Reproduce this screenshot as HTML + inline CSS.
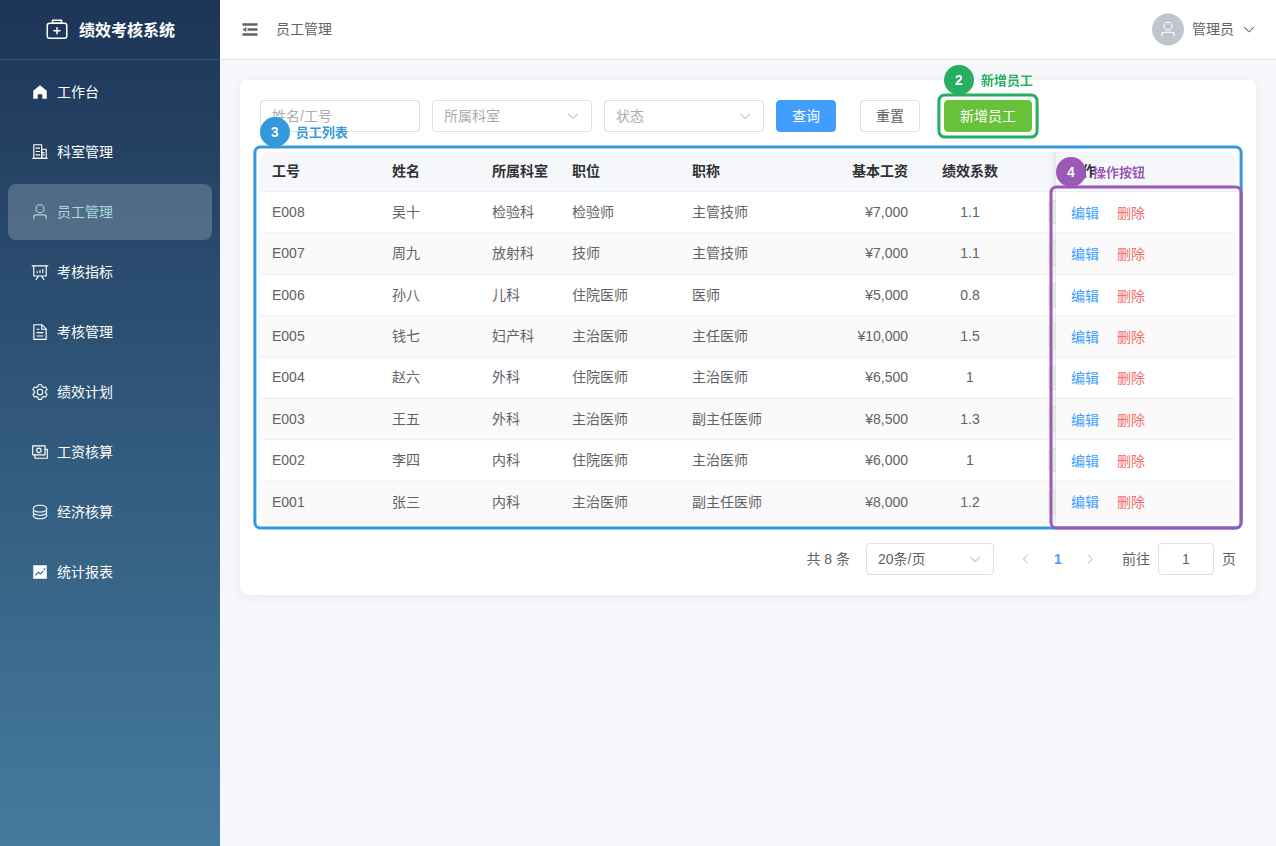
<!DOCTYPE html>
<html lang="zh-CN">
<head>
<meta charset="utf-8">
<title>绩效考核系统 - 员工管理</title>
<style>
*{box-sizing:border-box;margin:0;padding:0}
html,body{width:1276px;height:846px;overflow:hidden}
body{font-family:"Liberation Sans","Noto Sans CJK SC",sans-serif;font-size:14px;color:#606266;background:#f5f7fa;position:relative}
svg{display:block;fill:currentColor}
/* sidebar */
.aside{position:absolute;left:0;top:0;width:220px;height:846px;background:linear-gradient(180deg,#1d3557 0%,#457b9d 100%);color:#fff}
.logo{height:60px;display:flex;align-items:center;justify-content:center;border-bottom:1px solid rgba(255,255,255,.1);color:#fff}
.logo svg{width:24px;height:24px;margin-right:10px}
.logo span{font-size:16px;font-weight:700;letter-spacing:0;position:relative;top:-1px}
.menu{list-style:none}
.menu li{height:56px;margin:4px 8px;padding:0 20px;display:flex;align-items:center;border-radius:8px;color:#fff;font-size:14px;line-height:56px;white-space:nowrap}
.menu li .ic{width:24px;height:18px;margin-right:5px;display:flex;align-items:center;justify-content:center;flex:none}
.menu li .ic svg{width:18px;height:18px}
.menu li.active{background:rgba(255,255,255,.2);color:#a8dadc}
/* header */
.header{position:absolute;left:220px;top:0;width:1056px;height:60px;background:#fff;border-bottom:1px solid #e4e7ed;display:flex;align-items:center;justify-content:space-between;padding:0 20px 1px}
.hl{display:flex;align-items:center;transform:translateY(.45px)}
.fold{width:20px;height:20px;color:#606266;margin-right:16px}
.fold svg{width:20px;height:20px}
.crumb{font-size:14px;color:#606266;line-height:1;position:relative;top:0}
.hr{display:flex;align-items:center;color:#606266;transform:translateY(.45px)}
.avatar{width:32px;height:32px;border-radius:50%;background:#c0c4cc;color:#fff;display:flex;align-items:center;justify-content:center}
.avatar svg{width:18px;height:18px}
.uname{margin:0 8px;font-size:14px;position:relative;top:-1px}
.hr .arr svg{width:14px;height:14px}
/* main card */
.card{position:absolute;left:240px;top:80px;width:1016px;height:515px;background:#fff;border-radius:8px;box-shadow:0 2px 12px rgba(0,0,0,.06)}
.filters{position:absolute;left:20px;top:20px;height:32px;display:flex;align-items:center}
.inp{width:160px;height:32px;border:1px solid #dcdfe6;border-radius:4px;padding:0 11px;display:flex;align-items:center;justify-content:space-between;color:#a8abb2;font-size:14px;margin-right:12px;background:#fff}
.inp svg{width:14px;height:14px;color:#a8abb2}
.btn{height:32px;padding:0 15px;border-radius:4px;border:1px solid #dcdfe6;background:#fff;color:#606266;font-size:14px;display:flex;align-items:center;justify-content:center;white-space:nowrap}
.btn.primary{background:#409eff;border-color:#409eff;color:#fff}
.btn.success{background:#67c23a;border-color:#67c23a;color:#fff}
/* table */
.tbl{position:absolute;left:20px;top:72px;width:976px;border-collapse:separate;border-spacing:0;table-layout:fixed;font-size:14px;color:#606266}
.tbl th{height:40px;background:#f5f7fa;color:#303133;font-weight:700;text-align:left;padding:0 12px;border-bottom:1px solid #ebeef5;white-space:nowrap}
.tbl td{height:41.375px;padding:0 12px;border-bottom:1px solid transparent;white-space:nowrap;background:#fff}
.tbl tr:nth-child(even) td{background:#fafafa}
.tbl .r{text-align:right}
.tbl .c{text-align:center}
.tbl th:first-child{border-top-left-radius:8px}
.tbl th:last-child{border-top-right-radius:8px}
.tbl tbody tr:last-child td:first-child{border-bottom-left-radius:8px}
.tbl tbody tr:last-child td:last-child{border-bottom-right-radius:8px}
.fx{position:relative}
.fx::after{content:"";position:absolute;left:-10px;top:0;bottom:-1px;width:10px;box-shadow:inset -10px 0 10px -10px rgba(0,0,0,.15)}
.tagpeek{position:absolute;left:-8px;top:8px;width:8px;height:24px;background:#f0f9eb;border:1px solid #e1f3d8;border-right:0;border-radius:4px 0 0 4px}
.lk{color:#409eff;margin-left:3px;position:relative;top:0}
.lk.d{color:#f56c6c;margin-left:18px}
/* pagination */
.pg{position:absolute;right:20px;top:463px;height:32px;display:flex;align-items:center;color:#606266;font-size:14px}
.pg .sel{width:128px;height:32px;border:1px solid #dcdfe6;border-radius:4px;padding:0 11px;display:flex;align-items:center;justify-content:space-between;margin-left:16px;color:#606266}
.pg .sel svg{width:14px;height:14px;color:#a8abb2}
.pg .nav{width:32px;height:32px;display:flex;align-items:center;justify-content:center;color:#a8abb2}
.pg .nav svg{width:12px;height:12px}
.pg .num{width:32px;height:32px;display:flex;align-items:center;justify-content:center;color:#409eff;font-weight:700}
.pg .go{width:56px;height:32px;border:1px solid #dcdfe6;border-radius:4px;display:flex;align-items:center;justify-content:center;margin:0 8px;color:#606266}
.z{position:relative;top:-1px}
.l{position:relative}
.u .l{top:-1px}
.u .z{top:-2px}
.tbl th .z{top:-2px}
.u .lk{top:-1px}
.tbl tbody tr:last-child .lk{top:-1px}
/* annotations */
.box{position:absolute;border:3px solid;border-radius:8px;pointer-events:none}
.badge{will-change:transform;position:absolute;width:30px;height:30px;border-radius:50%;color:#fff;font-weight:700;font-size:14px;display:flex;align-items:center;justify-content:center}
.lab{will-change:transform;position:absolute;font-size:13px;font-weight:700;line-height:18px;white-space:nowrap}
</style>
</head>
<body>
<div class="aside">
  <div class="logo">
    <svg viewBox="0 0 1024 1024"><path d="M192 256a64 64 0 0 0-64 64v448a64 64 0 0 0 64 64h640a64 64 0 0 0 64-64V320a64 64 0 0 0-64-64zm0-64h640a128 128 0 0 1 128 128v448a128 128 0 0 1-128 128H192A128 128 0 0 1 64 768V320a128 128 0 0 1 128-128"/><path d="M544 512h96a32 32 0 0 1 0 64h-96v96a32 32 0 0 1-64 0v-96h-96a32 32 0 0 1 0-64h96v-96a32 32 0 0 1 64 0zM352 128v64h320v-64zm-32-64h384a32 32 0 0 1 32 32v128a32 32 0 0 1-32 32H320a32 32 0 0 1-32-32V96a32 32 0 0 1 32-32"/></svg>
    <span>绩效考核系统</span>
  </div>
  <ul class="menu">
    <li><span class="ic"><svg viewBox="0 0 1024 1024"><path d="M512 128 128 447.936V896h255.936V640H640v256h255.936V447.936z"/></svg></span>工作台</li>
    <li><span class="ic"><svg viewBox="0 0 1024 1024"><path d="M192 128v704h384V128zm-32-64h448a32 32 0 0 1 32 32v768a32 32 0 0 1-32 32H160a32 32 0 0 1-32-32V96a32 32 0 0 1 32-32"/><path d="M256 256h256v64H256zm0 192h256v64H256zm0 192h256v64H256zm384-128h128v64H640zm0 128h128v64H640zM64 832h896v64H64z"/><path d="M640 384v448h192V384zm-32-64h256a32 32 0 0 1 32 32v512a32 32 0 0 1-32 32H608a32 32 0 0 1-32-32V352a32 32 0 0 1 32-32"/></svg></span>科室管理</li>
    <li class="active"><span class="ic"><svg viewBox="0 0 1024 1024"><path d="M512 512a192 192 0 1 0 0-384 192 192 0 0 0 0 384m0 64a256 256 0 1 1 0-512 256 256 0 0 1 0 512m320 320v-96a96 96 0 0 0-96-96H288a96 96 0 0 0-96 96v96a32 32 0 1 1-64 0v-96a160 160 0 0 1 160-160h448a160 160 0 0 1 160 160v96a32 32 0 1 1-64 0"/></svg></span>员工管理</li>
    <li><span class="ic"><svg viewBox="0 0 1024 1024"><path d="m665.216 768 110.848 192h-73.856L591.360 768H433.024L322.176 960H248.320l110.848-192H160a32 32 0 0 1-32-32V192H64a32 32 0 0 1 0-64h896a32 32 0 1 1 0 64h-64v544a32 32 0 0 1-32 32zM832 192H192v512h640zM352 448a32 32 0 0 1 32 32v64a32 32 0 0 1-64 0v-64a32 32 0 0 1 32-32m160-64a32 32 0 0 1 32 32v128a32 32 0 0 1-64 0V416a32 32 0 0 1 32-32m160-64a32 32 0 0 1 32 32v192a32 32 0 1 1-64 0V352a32 32 0 0 1 32-32"/></svg></span>考核指标</li>
    <li><span class="ic"><svg viewBox="0 0 1024 1024"><path d="M832 384H576V128H192v768h640zm-26.496-64L640 154.496V320zM160 64h480l256 256v608a32 32 0 0 1-32 32H160a32 32 0 0 1-32-32V96a32 32 0 0 1 32-32m160 448h384v64H320zm0-192h160v64H320zm0 384h384v64H320z"/></svg></span>考核管理</li>
    <li><span class="ic"><svg viewBox="0 0 1024 1024"><path d="M600.704 64a32 32 0 0 1 30.464 22.208l35.200 109.376c14.784 7.232 28.928 15.360 42.432 24.512l112.384-24.192a32 32 0 0 1 34.432 15.360L944.320 364.800a32 32 0 0 1-4.032 37.504l-77.120 85.120a357.120 357.120 0 0 1 0 49.024l77.120 85.248a32 32 0 0 1 4.032 37.504l-88.704 153.600a32 32 0 0 1-34.432 15.296L708.800 803.904c-13.440 9.088-27.648 17.280-42.368 24.512l-35.264 109.376A32 32 0 0 1 600.704 960H423.296a32 32 0 0 1-30.464-22.208L357.696 828.480a351.616 351.616 0 0 1-42.560-24.640l-112.320 24.256a32 32 0 0 1-34.432-15.360L79.680 659.200a32 32 0 0 1 4.032-37.504l77.120-85.248a357.120 357.120 0 0 1 0-48.896l-77.120-85.248A32 32 0 0 1 79.680 364.800l88.704-153.600a32 32 0 0 1 34.432-15.296l112.320 24.256c13.568-9.152 27.776-17.408 42.560-24.640l35.200-109.312A32 32 0 0 1 423.232 64H600.640zm-23.424 64H446.720l-36.352 113.088-24.512 11.968a294.113 294.113 0 0 0-34.816 20.096l-22.656 15.360-116.224-25.088-65.280 113.152 79.680 88.192-1.920 27.136a293.120 293.120 0 0 0 0 40.192l1.920 27.136-79.808 88.192 65.344 113.152 116.224-25.024 22.656 15.296a294.113 294.113 0 0 0 34.816 20.096l24.512 11.968L446.720 896h130.688l36.480-113.152 24.448-11.904a288.282 288.282 0 0 0 34.752-20.096l22.592-15.296 116.288 25.024 65.280-113.152-79.744-88.192 1.920-27.136a293.120 293.120 0 0 0 0-40.256l-1.920-27.136 79.808-88.128-65.344-113.152-116.288 24.960-22.592-15.232a287.616 287.616 0 0 0-34.752-20.096l-24.448-11.904L577.344 128zM512 320a192 192 0 1 1 0 384 192 192 0 0 1 0-384m0 64a128 128 0 1 0 0 256 128 128 0 0 0 0-256"/></svg></span>绩效计划</li>
    <li><span class="ic"><svg viewBox="0 0 1024 1024"><path d="M256 640v192h640V384H768v-64h150.976c14.272 0 19.456 1.472 24.640 4.288a29.056 29.056 0 0 1 12.160 12.096c2.752 5.184 4.224 10.368 4.224 24.640v493.952c0 14.272-1.472 19.456-4.288 24.640a29.056 29.056 0 0 1-12.096 12.160c-5.184 2.752-10.368 4.224-24.640 4.224H233.024c-14.272 0-19.456-1.472-24.640-4.288a29.056 29.056 0 0 1-12.160-12.096c-2.688-5.184-4.224-10.368-4.224-24.576V640z"/><path d="M768 192H128v448h640zm64-22.976v493.952c0 14.272-1.472 19.456-4.288 24.640a29.056 29.056 0 0 1-12.096 12.160c-5.184 2.752-10.368 4.224-24.640 4.224H105.024c-14.272 0-19.456-1.472-24.640-4.288a29.056 29.056 0 0 1-12.160-12.096C65.536 682.432 64 677.248 64 663.040V169.024c0-14.272 1.472-19.456 4.288-24.640a29.056 29.056 0 0 1 12.096-12.160C85.568 129.536 90.752 128 104.960 128h685.952c14.272 0 19.456 1.472 24.640 4.288a29.056 29.056 0 0 1 12.160 12.096c2.752 5.184 4.224 10.368 4.224 24.640z"/><path d="M448 576a160 160 0 1 1 0-320 160 160 0 0 1 0 320m0-64a96 96 0 1 0 0-192 96 96 0 0 0 0 192"/></svg></span>工资核算</li>
    <li><span class="ic"><svg viewBox="0 0 1024 1024"><path d="m161.920 580.736 29.888 58.880C171.328 659.776 160 681.728 160 704c0 82.304 155.328 160 352 160s352-77.696 352-160c0-22.272-11.392-44.160-31.808-64.320l30.464-58.432C903.936 615.808 928 657.664 928 704c0 129.728-188.544 224-416 224S96 833.728 96 704c0-46.592 24.320-88.576 65.920-123.264"/><path d="m161.920 388.736 29.888 58.880C171.328 467.840 160 489.792 160 512c0 82.304 155.328 160 352 160s352-77.696 352-160c0-22.272-11.392-44.160-31.808-64.320l30.464-58.432C903.936 423.808 928 465.664 928 512c0 129.728-188.544 224-416 224S96 641.728 96 512c0-46.592 24.320-88.576 65.920-123.264"/><path d="M512 544c-227.456 0-416-94.272-416-224S284.544 96 512 96s416 94.272 416 224-188.544 224-416 224m0-64c196.672 0 352-77.696 352-160S708.672 160 512 160s-352 77.696-352 160 155.328 160 352 160"/></svg></span>经济核算</li>
    <li><span class="ic"><svg viewBox="0 0 1024 1024"><path d="M128 896V128h768v768zm291.712-327.296 128 102.400 180.160-201.792-47.744-42.624-139.840 156.608-128-102.400-180.160 201.792 47.744 42.624 139.840-156.608zM816 352a48 48 0 1 0-96 0 48 48 0 0 0 96 0"/></svg></span>统计报表</li>
  </ul>
</div>

<div class="header">
  <div class="hl">
    <div class="fold"><svg viewBox="0 0 1024 1024"><path d="M896 192H128v128h768zm0 256H384v128h512zm0 256H128v128h768zM320 384 128 512l192 128z"/></svg></div>
    <div class="crumb">员工管理</div>
  </div>
  <div class="hr">
    <div class="avatar"><svg viewBox="0 0 1024 1024"><path d="M512 512a192 192 0 1 0 0-384 192 192 0 0 0 0 384m0 64a256 256 0 1 1 0-512 256 256 0 0 1 0 512m320 320v-96a96 96 0 0 0-96-96H288a96 96 0 0 0-96 96v96a32 32 0 1 1-64 0v-96a160 160 0 0 1 160-160h448a160 160 0 0 1 160 160v96a32 32 0 1 1-64 0"/></svg></div>
    <span class="uname">管理员</span>
    <span class="arr"><svg viewBox="0 0 1024 1024"><path d="M831.872 340.864 512 652.672 192.128 340.864a30.592 30.592 0 0 0-42.752 0 29.120 29.120 0 0 0 0 41.600L489.664 714.240a32 32 0 0 0 44.672 0l340.288-331.712a29.120 29.120 0 0 0 0-41.728 30.592 30.592 0 0 0-42.752 0z"/></svg></span>
  </div>
</div>

<div class="card">
  <div class="filters">
    <div class="inp"><span class="z">姓名/工号</span></div>
    <div class="inp"><span class="z">所属科室</span><svg viewBox="0 0 1024 1024"><path d="M831.872 340.864 512 652.672 192.128 340.864a30.592 30.592 0 0 0-42.752 0 29.120 29.120 0 0 0 0 41.600L489.664 714.240a32 32 0 0 0 44.672 0l340.288-331.712a29.120 29.120 0 0 0 0-41.728 30.592 30.592 0 0 0-42.752 0z"/></svg></div>
    <div class="inp"><span class="z">状态</span><svg viewBox="0 0 1024 1024"><path d="M831.872 340.864 512 652.672 192.128 340.864a30.592 30.592 0 0 0-42.752 0 29.120 29.120 0 0 0 0 41.600L489.664 714.240a32 32 0 0 0 44.672 0l340.288-331.712a29.120 29.120 0 0 0 0-41.728 30.592 30.592 0 0 0-42.752 0z"/></svg></div>
    <div class="btn primary"><span class="z">查询</span></div>
    <div class="btn" style="margin-left:24px"><span class="z">重置</span></div>
    <div class="btn success" style="margin-left:24px"><span class="z">新增员工</span></div>
  </div>

  <table class="tbl">
    <colgroup><col style="width:120px"><col style="width:100px"><col style="width:80px"><col style="width:120px"><col style="width:120px"><col style="width:120px"><col style="width:100px"><col style="width:36px"><col style="width:180px"></colgroup>
    <thead><tr><th><span class="z">工号</span></th><th><span class="z">姓名</span></th><th><span class="z">所属科室</span></th><th><span class="z">职位</span></th><th><span class="z">职称</span></th><th class="r"><span class="z">基本工资</span></th><th class="c"><span class="z">绩效系数</span></th><th></th><th class="fx"><span class="z">操作</span></th></tr></thead>
    <tbody>
      <tr><td><span class="l">E008</span></td><td><span class="z">吴十</span></td><td><span class="z">检验科</span></td><td><span class="z">检验师</span></td><td><span class="z">主管技师</span></td><td class="r"><span class="l">¥7,000</span></td><td class="c"><span class="l">1.1</span></td><td></td><td class="fx"><i class="tagpeek"></i><span class="lk">编辑</span><span class="lk d">删除</span></td></tr>
      <tr class="u"><td><span class="l">E007</span></td><td><span class="z">周九</span></td><td><span class="z">放射科</span></td><td><span class="z">技师</span></td><td><span class="z">主管技师</span></td><td class="r"><span class="l">¥7,000</span></td><td class="c"><span class="l">1.1</span></td><td></td><td class="fx"><i class="tagpeek"></i><span class="lk">编辑</span><span class="lk d">删除</span></td></tr>
      <tr><td><span class="l">E006</span></td><td><span class="z">孙八</span></td><td><span class="z">儿科</span></td><td><span class="z">住院医师</span></td><td><span class="z">医师</span></td><td class="r"><span class="l">¥5,000</span></td><td class="c"><span class="l">0.8</span></td><td></td><td class="fx"><i class="tagpeek"></i><span class="lk">编辑</span><span class="lk d">删除</span></td></tr>
      <tr><td><span class="l">E005</span></td><td><span class="z">钱七</span></td><td><span class="z">妇产科</span></td><td><span class="z">主治医师</span></td><td><span class="z">主任医师</span></td><td class="r"><span class="l">¥10,000</span></td><td class="c"><span class="l">1.5</span></td><td></td><td class="fx"><i class="tagpeek"></i><span class="lk">编辑</span><span class="lk d">删除</span></td></tr>
      <tr class="u"><td><span class="l">E004</span></td><td><span class="z">赵六</span></td><td><span class="z">外科</span></td><td><span class="z">住院医师</span></td><td><span class="z">主治医师</span></td><td class="r"><span class="l">¥6,500</span></td><td class="c"><span class="l">1</span></td><td></td><td class="fx"><i class="tagpeek"></i><span class="lk">编辑</span><span class="lk d">删除</span></td></tr>
      <tr><td><span class="l">E003</span></td><td><span class="z">王五</span></td><td><span class="z">外科</span></td><td><span class="z">主治医师</span></td><td><span class="z">副主任医师</span></td><td class="r"><span class="l">¥8,500</span></td><td class="c"><span class="l">1.3</span></td><td></td><td class="fx"><i class="tagpeek"></i><span class="lk">编辑</span><span class="lk d">删除</span></td></tr>
      <tr><td><span class="l">E002</span></td><td><span class="z">李四</span></td><td><span class="z">内科</span></td><td><span class="z">住院医师</span></td><td><span class="z">主治医师</span></td><td class="r"><span class="l">¥6,000</span></td><td class="c"><span class="l">1</span></td><td></td><td class="fx"><i class="tagpeek"></i><span class="lk">编辑</span><span class="lk d">删除</span></td></tr>
      <tr><td><span class="l">E001</span></td><td><span class="z">张三</span></td><td><span class="z">内科</span></td><td><span class="z">主治医师</span></td><td><span class="z">副主任医师</span></td><td class="r"><span class="l">¥8,000</span></td><td class="c"><span class="l">1.2</span></td><td></td><td class="fx"><i class="tagpeek"></i><span class="lk">编辑</span><span class="lk d">删除</span></td></tr>
    </tbody>
  </table>

  <div class="pg">
    <span class="z">共 8 条</span>
    <div class="sel"><span class="z">20条/页</span><svg viewBox="0 0 1024 1024"><path d="M831.872 340.864 512 652.672 192.128 340.864a30.592 30.592 0 0 0-42.752 0 29.120 29.120 0 0 0 0 41.600L489.664 714.240a32 32 0 0 0 44.672 0l340.288-331.712a29.120 29.120 0 0 0 0-41.728 30.592 30.592 0 0 0-42.752 0z"/></svg></div>
    <div class="nav" style="margin-left:16px"><svg viewBox="0 0 1024 1024"><path d="M609.408 149.376 277.760 489.600a32 32 0 0 0 0 44.672l331.648 340.352a29.120 29.120 0 0 0 41.728 0 30.592 30.592 0 0 0 0-42.752L339.264 511.936l311.872-319.872a30.592 30.592 0 0 0 0-42.688 29.120 29.120 0 0 0-41.728 0z"/></svg></div>
    <div class="num">1</div>
    <div class="nav"><svg viewBox="0 0 1024 1024"><path d="M340.864 149.312a30.592 30.592 0 0 0 0 42.752L652.736 512 340.864 831.872a30.592 30.592 0 0 0 0 42.752 29.120 29.120 0 0 0 41.728 0L714.240 534.336a32 32 0 0 0 0-44.672L382.592 149.376a29.120 29.120 0 0 0-41.728 0z"/></svg></div>
    <span class="z" style="margin-left:16px">前往</span>
    <div class="go">1</div>
    <span class="z">页</span>
  </div>
</div>

<!-- annotations -->
<svg class="ov" width="1276" height="846" viewBox="0 0 1276 846" style="position:absolute;left:0;top:0;pointer-events:none;fill:none">
  <g stroke="#ebeef5" stroke-width="1"><path d="M260 232.875H1236"/><path d="M260 274.250H1236"/><path d="M260 315.625H1236"/><path d="M260 357.000H1236"/><path d="M260 398.375H1236"/><path d="M260 439.750H1236"/><path d="M260 481.125H1236"/><path d="M265 522.500H1231"/></g>
  <rect x="254.9" y="146.9" width="986.2" height="381.2" rx="5.5" stroke="#3498db" stroke-width="3"/>
  <rect x="938.9" y="94.9" width="98.2" height="42.2" rx="6" stroke="#27ae60" stroke-width="3"/>
  <rect x="1051" y="186.9" width="190.1" height="341.2" rx="5.5" stroke="#9b59b6" stroke-width="3"/>
</svg>
<div class="badge" style="left:944px;top:65px;background:#27ae60">2</div>
<div class="lab" style="left:981px;top:72px;color:#27ae60">新增员工</div>
<div class="badge" style="left:260px;top:117px;background:#3498db">3</div>
<div class="lab" style="left:296px;top:124px;color:#3498db">员工列表</div>
<div class="badge" style="left:1056px;top:157px;background:#9b59b6">4</div>
<div class="lab" style="left:1093px;top:164px;color:#9b59b6">操作按钮</div>
</body>
</html>
